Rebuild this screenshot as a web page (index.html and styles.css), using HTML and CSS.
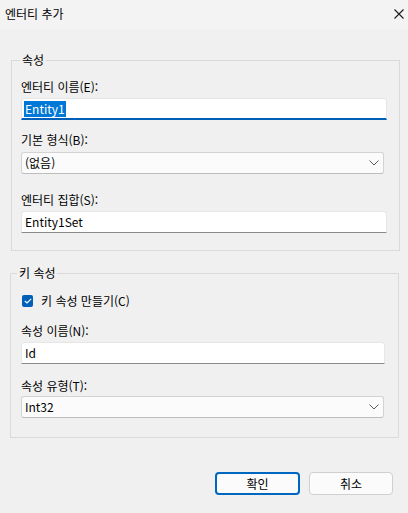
FILE: index.html
```html
<!DOCTYPE html>
<html lang="ko">
<head>
<meta charset="utf-8">
<link rel="stylesheet" href="styles.css">
</head>
<body>
<div class="window">
  <div class="titlebar">
    <span class="title">엔터티 추가</span>
    <svg class="close" width="10" height="10" viewBox="0 0 10 10"><path d="M0.5 0.5 L9.5 9.5 M9.5 0.5 L0.5 9.5" stroke="#1b1b1b" stroke-width="1.1" fill="none"/></svg>
  </div>
  <div class="content">
    <fieldset class="group g1">
      <legend>속성</legend>
      <div class="label l1">엔터티 이름(E):</div>
      <div class="field focused"><span class="sel">Entity1</span></div>
      <div class="label l2">기본 형식(B):</div>
      <div class="combo c1"><span>(없음)</span><svg class="chev" width="10" height="6" viewBox="0 0 10 6"><path d="M0.5 0.5 L5 5 L9.5 0.5" stroke="#5a5a5a" stroke-width="1" fill="none"/></svg></div>
      <div class="label l3">엔터티 집합(S):</div>
      <div class="field f3"><span>Entity1Set</span></div>
    </fieldset>
    <fieldset class="group g2">
      <legend>키 속성</legend>
      <div class="check">
        <span class="box"><svg width="8" height="6" viewBox="0 0 8 6"><path d="M0.8 3 L3 5 L7.2 0.8" stroke="#fff" stroke-width="1.1" fill="none"/></svg></span>
        <span>키 속성 만들기(C)</span>
      </div>
      <div class="label l4">속성 이름(N):</div>
      <div class="field f4"><span>Id</span></div>
      <div class="label l5">속성 유형(T):</div>
      <div class="combo c2"><span>Int32</span><svg class="chev" width="10" height="6" viewBox="0 0 10 6"><path d="M0.5 0.5 L5 5 L9.5 0.5" stroke="#5a5a5a" stroke-width="1" fill="none"/></svg></div>
    </fieldset>
    <div class="buttons">
      <div class="btn primary">확인</div>
      <div class="btn">취소</div>
    </div>
  </div>
</div>
</body>
</html>
```
FILE: styles.css
```css
* { box-sizing: border-box; }
html, body { margin: 0; padding: 0; }
body {
  width: 408px;
  height: 513px;
  background: #f0f0f0;
  font-family: "Noto Sans CJK KR", "Noto Sans", sans-serif;
  font-size: 12px;
  line-height: 16px;
  color: #000;
  overflow: hidden;
}
.window { width: 408px; height: 513px; display: flex; flex-direction: column; }
.titlebar {
  height: 29px;
  background: #f3f3f3;
  display: flex;
  align-items: center;
  justify-content: space-between;
  padding: 0 4px 1px 5px;
}
.title { font-size: 12px; color: #000; }
.content { flex: 1; display: flex; flex-direction: column; }
.group {
  border: 1px solid #dadada;
  margin: 0;
  padding: 0 0 0 9px;
  min-width: 0;
}
.group legend {
  padding: 0 2px;
  margin-left: -1px;
  line-height: 16px;
}
.g1 { margin: 23px 0 0 11px; width: 389px; padding-bottom: 17px; }
.g2 { margin: 14px 0 0 10px; width: 389px; padding-left: 10px; padding-bottom: 19px; }
.g2 legend { margin-left: -4px; }
.label { height: 16px; }
.l1 { margin-top: 11px; }
.l2 { margin-top: 12px; }
.l3 { margin-top: 18px; }
.l4 { margin-top: 14px; }
.l5 { margin-top: 14px; }
.field {
  height: 22px;
  width: 366px;
  background: #fff;
  border: 1px solid #e6e6e6;
  border-bottom: 1px solid #8a8a8a;
  border-radius: 3px 3px 0 0;
  display: flex;
  align-items: center;
  padding-left: 2px;
  margin-top: 3px;
}
.field span { padding-left: 1px; }
.field.focused { border-bottom: 2px solid #005fb8; padding-top: 1px; }
.field.focused .sel {
  background: #0078d7;
  color: #fff;
  padding: 0 1px;
}
.f4 { width: 364px; }
.combo {
  height: 22px;
  width: 363px;
  background: #fbfbfb;
  border: 1px solid #d3d3d3;
  border-bottom-color: #bdbdbd;
  border-radius: 3px;
  display: flex;
  align-items: center;
  justify-content: space-between;
  padding: 0 4px 0 3px;
}
.c1 { margin-top: 4px; }
.c2 { margin-top: 2px; }
.check {
  margin-top: 12px;
  height: 16px;
  display: flex;
  align-items: center;
  padding-left: 1px;
}
.box {
  width: 11px;
  height: 12px;
  background: #005fb8;
  border-radius: 2px;
  display: flex;
  align-items: center;
  justify-content: center;
  margin-right: 8px;
}
.buttons {
  display: flex;
  justify-content: flex-end;
  gap: 9px;
  margin-top: 34px;
  padding-right: 15px;
}
.btn {
  width: 84px;
  height: 23px;
  border: 1px solid #cfcfcf;
  border-radius: 4px;
  background: #fbfbfb;
  display: flex;
  align-items: center;
  justify-content: center;
}
.btn.primary { width: 85px; border: 2px solid #0067c0; }
```
